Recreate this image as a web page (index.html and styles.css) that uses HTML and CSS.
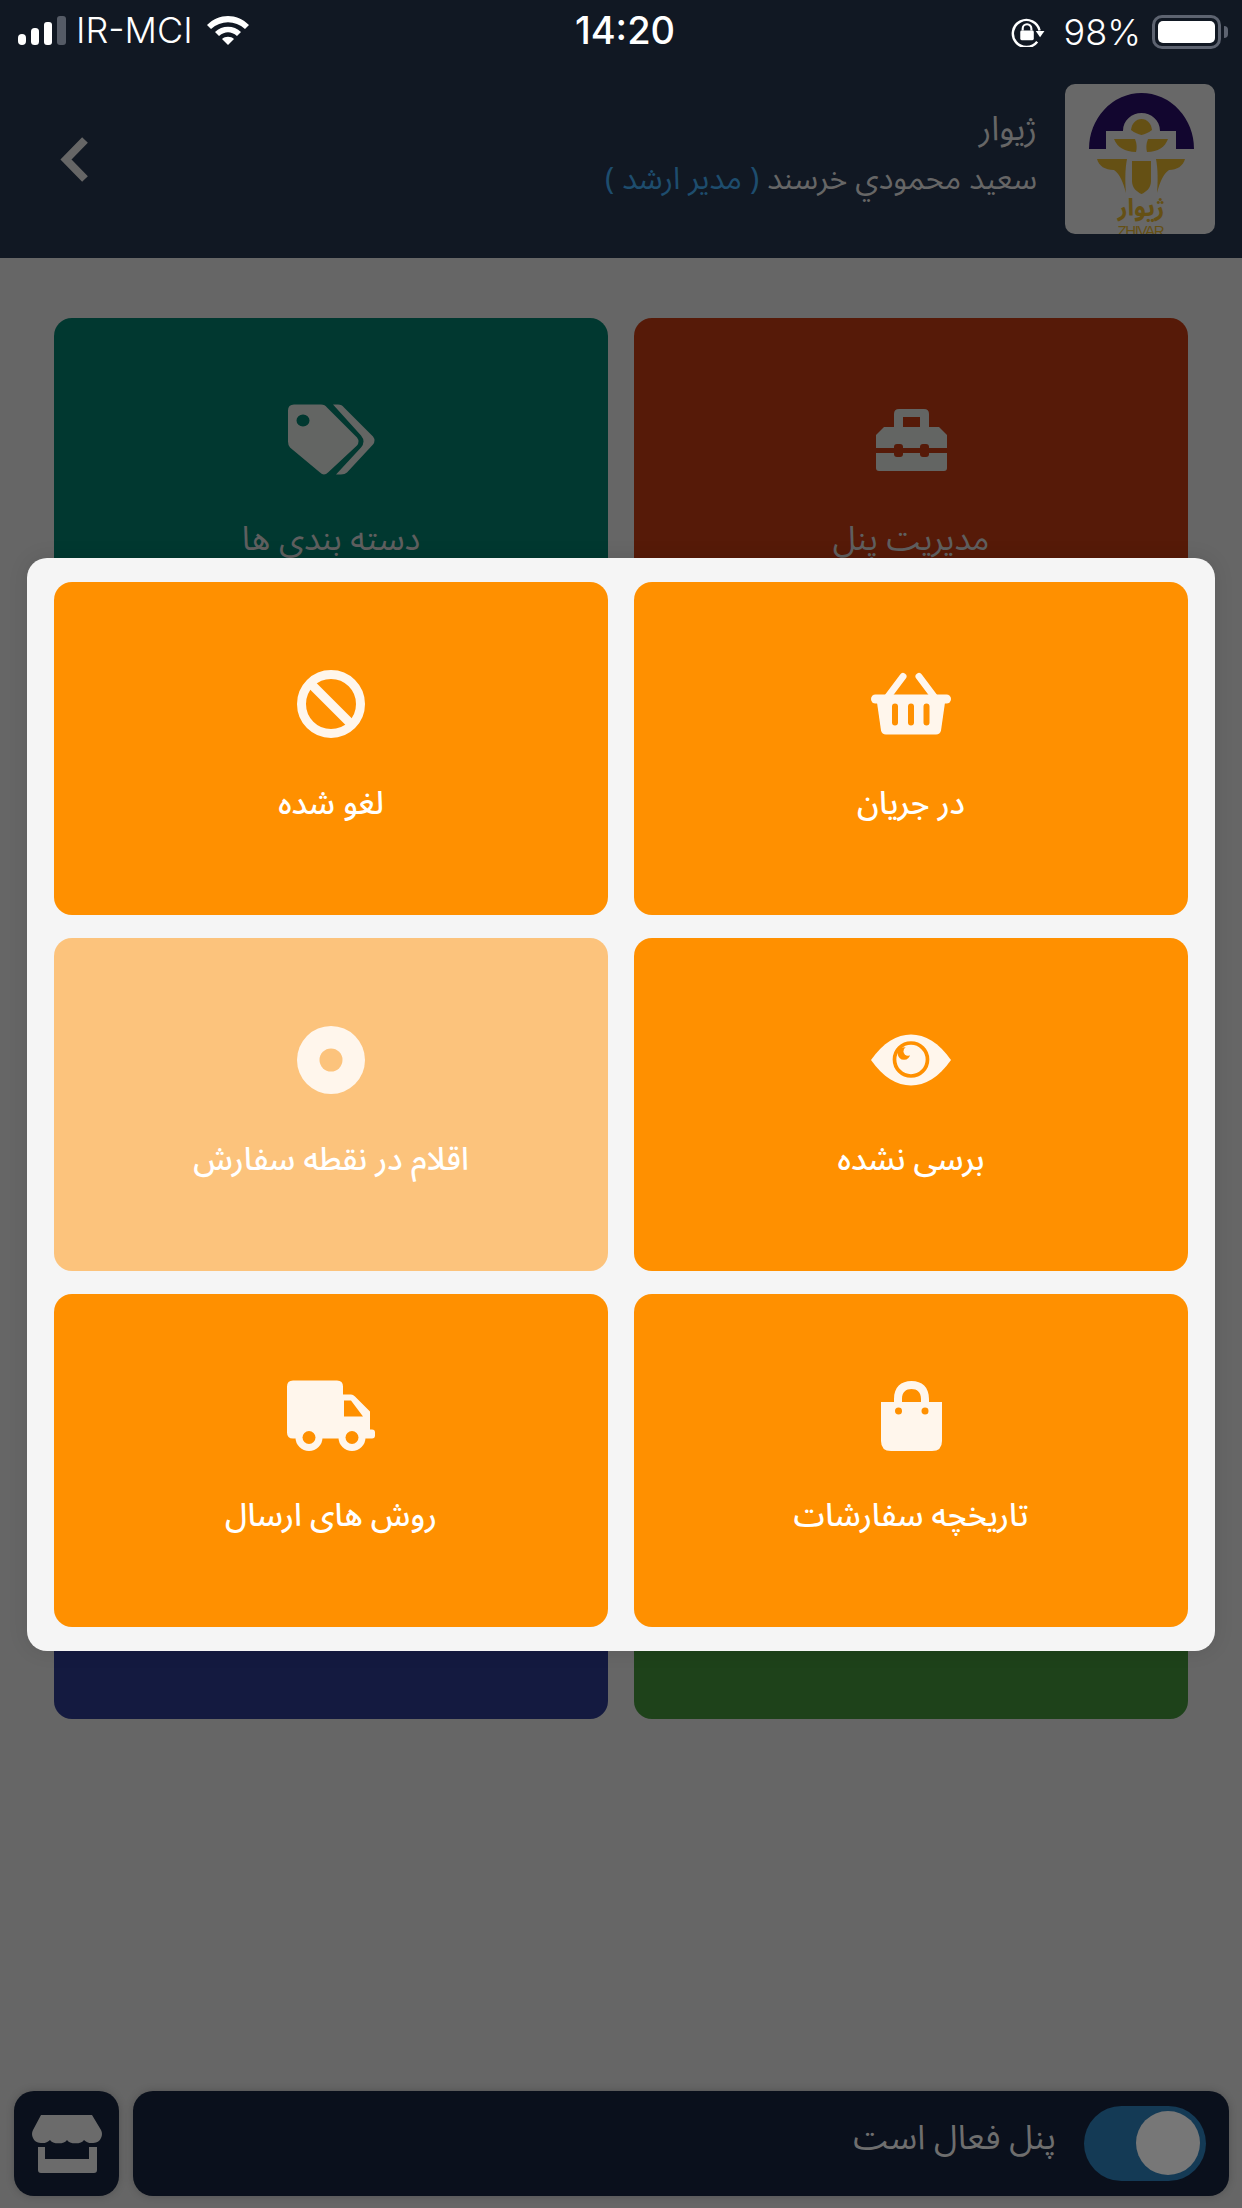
FILE: index.html
```html
<!DOCTYPE html>
<html lang="fa">
<head>
    <meta charset="UTF-8">
    <meta name="viewport" content="width=device-width, initial-scale=1.0">
    <title>پنل مدیریت</title>
    <link rel="stylesheet" href="styles.css">
</head>
<body>
    <!-- Status Bar -->
    <div class="status-bar">
        <div class="status-left">
            <svg class="signal" width="48" height="29" viewBox="0 0 48 29">
                <rect x="0" y="18" width="8" height="11" rx="4" fill="#fff"/>
                <rect x="13" y="12" width="8" height="17" rx="3.5" fill="#fff"/>
                <rect x="26" y="6" width="8" height="23" rx="3" fill="#fff"/>
                <rect x="39" y="0" width="9" height="29" rx="3" fill="#555b66"/>
            </svg>
            <span class="carrier">IR-MCI</span>
            <svg class="wifi" width="42" height="29" viewBox="0 0 42 29">
                <path d="M0 9 C12 -3 30 -3 42 9 L38 13 C28 4 14 4 4 13Z" fill="#fff"/>
                <path d="M8 16 C15 9 27 9 34 16 L30 20 C24 15 18 15 12 20Z" fill="#fff"/>
                <path d="M15 23 C18 20 24 20 27 23 L21 29Z" fill="#fff"/>
            </svg>
        </div>
        <div class="clock">14:20</div>
        <div class="status-right">
            <svg class="rotation" width="34" height="29" viewBox="0 0 34 30">
                <path d="M29 13 A14 14 0 1 0 26.500 24.500" fill="none" stroke="#fff" stroke-width="2.500"/>
                <path d="M25 13.500 H34 L29.500 20Z" fill="#fff"/>
                <rect x="9" y="13" width="14" height="10" rx="1.500" fill="#fff"/>
                <path d="M11.500 13 V11 A4.500 4.500 0 0 1 20.500 11 V13" fill="none" stroke="#fff" stroke-width="2.200"/>
            </svg>
            <span class="percent">98%</span>
            <div class="battery"><div class="battery-fill"></div></div>
            <div class="battery-nub"></div>
        </div>
    </div>

    <!-- Header -->
    <header class="header" dir="rtl">
        <div class="logo">
            <svg width="150" height="150" viewBox="0 0 150 150">
                <path d="M24 65 A52.500 56 0 0 1 129 65 H111 V47 H95 C95 36 86 29 76.500 29 C67 29 58 36 58 47 H41 V65Z" fill="#12062f"/>
                <g fill="#655014">
                    <path d="M66 46 C67 39 71 35 76.500 35 C82 35 86 39 87 46 C83 49 80 50 76.500 51 C73 50 70 49 66 46Z"/>
                    <path d="M49 55 H70 C72 60 72 64 71 68 C60 68 52 63 49 55Z"/>
                    <path d="M103 55 H83 C81 60 81 64 82 68 C93 68 100 63 103 55Z"/>
                    <path d="M32 75 H62 C60 85 60 98 61 109 C58 98 55 90 49 86 C40 86 34 82 32 75Z"/>
                    <path d="M120 75 H91 C93 85 93 98 92 109 C95 98 98 90 104 86 C112 86 118 82 120 75Z"/>
                    <path d="M67 77 H86 V97 C86 104 81 108 76.500 110 C72 108 67 104 67 97Z"/>
                    <text class="logo-fa" x="76" y="132" text-anchor="middle">ژیوار</text>
                    <text class="logo-en" x="76" y="152" text-anchor="middle" textLength="47">ZHIVAR</text>
                </g>
            </svg>
        </div>
        <div class="user-info">
            <div class="shop-name">ژیوار</div>
            <div class="user-name">سعید محمودي خرسند <span class="user-role">( مدیر ارشد )</span></div>
        </div>
        <svg class="back" width="28" height="45" viewBox="0 0 28 45">
            <path d="M25 3 L6 22.500 L25 42" fill="none" stroke="#666" stroke-width="8"/>
        </svg>
    </header>

    <!-- Panel Menu (behind the dialog) -->
    <main class="panel-grid" dir="rtl">
        <div class="tile tile-red">
            <svg class="tile-icon" width="71" height="62" viewBox="0 0 71 62">
                <path d="M18 18 V5 Q18 0 23 0 H48 Q53 0 53 5 V18 H44 V8 H27 V18Z"/>
                <path d="M8 18 H63 L71 26 V39 H0 V26Z"/>
                <path d="M0 44 H71 V59 Q71 62 68 62 H3 Q0 62 0 59Z"/>
                <rect x="18" y="35" width="9" height="13" rx="3" fill="#561a08"/>
                <rect x="44" y="35" width="9" height="13" rx="3" fill="#561a08"/>
            </svg>
            <div class="tile-label">مدیریت پنل</div>
        </div>
        <div class="tile tile-teal">
            <svg class="tile-icon" width="87" height="71" viewBox="0 0 87 71">
                <path fill-rule="evenodd" d="M6 0 H33 Q37 0 39 3 L69 33 Q72 37 69 41 L40 68 Q36 72 32 68 L2 43 Q0 41 0 37 V6 Q0 0 6 0Z M15 10 A6.500 6 0 1 0 15.010 22 A6.500 6 0 1 0 15 10Z"/>
                <path d="M45 0 H50 Q54 0 56 3 L85 32 Q88 36 85 40 L59 68 Q57 70 53 70 H48 L73 43 Q78 37 73 31Z"/>
            </svg>
            <div class="tile-label">دسته بندی ها</div>
        </div>
        <div class="tile tile-plain"></div>
        <div class="tile tile-plain"></div>
        <div class="tile tile-plain"></div>
        <div class="tile tile-plain"></div>
        <div class="tile tile-green"></div>
        <div class="tile tile-navy"></div>
    </main>

    <!-- Bottom Bar -->
    <footer class="bottom-bar" dir="rtl">
        <div class="panel-status">
            <div class="toggle"><div class="toggle-knob"></div></div>
            <span class="panel-text">پنل فعال است</span>
        </div>
        <div class="store-btn">
            <svg width="72" height="58" viewBox="0 0 72 58">
                <path d="M10 0 H61 L70 15 Q72 19 70 23 A9.500 7 0 0 1 53 25 A9 5 0 0 1 36 25 A9 5 0 0 1 19 25 A9.500 7 0 0 1 2 23 Q0 19 2 15Z" fill="#6b6b6b"/>
                <path d="M7 32 H14 V44 H58 V32 H66 V55 Q66 58 63 58 H10 Q7 58 7 55Z" fill="#6b6b6b"/>
            </svg>
        </div>
    </footer>

    <!-- Orders Dialog -->
    <div class="dialog" dir="rtl">
        <div class="tile tile-orange">
            <svg class="tile-icon" width="80" height="63" viewBox="0 0 80 63">
                <path d="M32 4 L17 24 M48 4 L63 24" fill="none" stroke="#fff6ec" stroke-width="7" stroke-linecap="round"/>
                <rect x="0" y="22" width="80" height="9" rx="4.500"/>
                <path d="M6 30 H74 L70 58 Q69 62 65 62 H15 Q11 62 10 58Z"/>
                <path d="M24 34 V50 M40 34 V50 M55.500 34 V50" fill="none" stroke="#ff9000" stroke-width="6" stroke-linecap="round"/>
            </svg>
            <div class="tile-label">در جریان</div>
        </div>
        <div class="tile tile-orange">
            <svg class="tile-icon" width="68" height="68" viewBox="0 0 68 68">
                <circle cx="34" cy="34" r="29.500" fill="none" stroke="#fff6ec" stroke-width="9"/>
                <path d="M14 14 L54 54" stroke="#fff6ec" stroke-width="9"/>
            </svg>
            <div class="tile-label">لغو شده</div>
        </div>
        <div class="tile tile-orange">
            <svg class="tile-icon" width="80" height="51" viewBox="0 0 80 51">
                <path d="M0 25.500 C12 8 26 0 40 0 C54 0 68 8 80 25.500 C68 43 54 51 40 51 C26 51 12 43 0 25.500Z"/>
                <circle cx="40" cy="25" r="16.500" fill="none" stroke="#ff9000" stroke-width="3.700"/>
                <circle cx="33" cy="19" r="6.300" fill="#ff9000"/>
                <circle cx="37" cy="16.700" r="4.500" fill="#fff6ec"/>
            </svg>
            <div class="tile-label">برسی نشده</div>
        </div>
        <div class="tile tile-orange tile-faded">
            <svg class="tile-icon" width="68" height="68" viewBox="0 0 68 68">
                <circle cx="34" cy="34" r="34"/>
                <circle cx="34" cy="34" r="11.500" fill="#fcc37c"/>
            </svg>
            <div class="tile-label">اقلام در نقطه سفارش</div>
        </div>
        <div class="tile tile-orange">
            <svg class="tile-icon" width="61" height="70" viewBox="0 0 61 70">
                <path d="M13 21 V18 C13 6 20 0 30.500 0 C41 0 48 6 48 18 V21 H40 V18 C40 11 36 8 30.500 8 C25 8 21 11 21 18 V21Z"/>
                <path fill-rule="evenodd" d="M0 21 H61 V60 Q61 70 51 70 H10 Q0 70 0 60Z M17.500 26.500 A3.500 3.500 0 1 0 17.510 33.500 A3.500 3.500 0 1 0 17.500 26.500Z M44 26.500 A3.500 3.500 0 1 0 44.010 33.500 A3.500 3.500 0 1 0 44 26.500Z"/>
            </svg>
            <div class="tile-label">تاریخچه سفارشات</div>
        </div>
        <div class="tile tile-orange">
            <svg class="tile-icon" width="88" height="71" viewBox="0 0 88 71">
                <path fill-rule="evenodd" d="M6 0 H50 Q56 0 56 6 V14 H64 Q66 14 68 16 L83 31 V49 H85 Q88 49 88 52 V55 Q88 58 85 58 H6 Q0 58 0 52 V6 Q0 0 6 0Z M57 20 V36 H76 L64 20Z"/>
                <circle cx="22" cy="57" r="13.500"/>
                <circle cx="65" cy="57" r="13.500"/>
                <circle cx="22" cy="57" r="6.500" fill="#ff9000"/>
                <circle cx="65" cy="57" r="6.500" fill="#ff9000"/>
            </svg>
            <div class="tile-label">روش های ارسال</div>
        </div>
    </div>
</body>
</html>
```

FILE: styles.css
```css
/* Basic Styles */
* {
    box-sizing: border-box;
}

body {
    margin: 0;
    width: 1242px;
    height: 2208px;
    display: flex;
    flex-direction: column;
    position: relative;
    overflow: hidden;
    background: #666;
    font-family: "Noto Sans Arabic", "DejaVu Sans", sans-serif;
}

/* Status Bar */
.status-bar {
    height: 60px;
    padding: 15px 14px 0 18px;
    display: grid;
    grid-template-columns: 1fr auto 1fr;
    align-items: start;
    background: #111823;
    color: #fff;
    font-family: Inter, sans-serif;
    font-size: 36px;
    line-height: 30px;
}

.status-left,
.status-right {
    display: flex;
    align-items: center;
}

.status-right {
    justify-content: flex-end;
}

.carrier {
    margin-left: 10px;
    font-weight: 300;
}

.wifi {
    margin-left: 14px;
}

.clock {
    margin-left: 4px;
    font-size: 38px;
    font-weight: 500;
}

.percent {
    margin-left: 19px;
    font-weight: 300;
}

.battery {
    width: 69px;
    height: 34px;
    margin-left: 11px;
    padding: 3px;
    border: 3px solid #5d6370;
    border-radius: 10px;
}

.battery-fill {
    width: 100%;
    height: 100%;
    background: #fff;
    border-radius: 5px;
}

.battery-nub {
    width: 4px;
    height: 12px;
    margin-left: 3px;
    background: #5d6370;
    border-radius: 0 4px 4px 0;
}

/* Header */
.header {
    height: 198px;
    padding: 24px 27px 0 60px;
    display: flex;
    align-items: flex-start;
    background: #111823;
}

.logo {
    width: 150px;
    height: 150px;
    flex-shrink: 0;
    background: #686868;
    border-radius: 10px;
    overflow: hidden;
}

.logo-fa {
    font-size: 24px;
    font-weight: bold;
}

.logo-en {
    font-family: "Liberation Sans", sans-serif;
    font-size: 15px;
}

.user-info {
    margin-right: 28px;
    padding-top: 22px;
    color: #666;
}

.shop-name {
    font-size: 34px;
    line-height: 46px;
}

.user-name {
    margin-top: 6px;
    font-size: 30.7px;
    line-height: 44px;
}

.user-role {
    color: #1e4d6e;
}

.back {
    margin-top: 53px;
    margin-right: auto;
}

/* Tiles */
.panel-grid,
.dialog {
    display: grid;
    grid-template-columns: 554px 554px;
    grid-auto-rows: 333px;
    gap: 23px 26px;
}

.panel-grid {
    padding: 60px 54px 0;
}

.tile {
    padding-top: 86px;
    display: flex;
    flex-direction: column;
    align-items: center;
    border-radius: 18px;
}

.tile-icon {
    height: 72px;
    flex-shrink: 0;
    fill: #636563;
}

.tile-label {
    margin-top: 39px;
    font-size: 33px;
    line-height: 50px;
    color: #5f5f5f;
}

.tile-red {
    background: #561a08;
}

.tile-teal {
    background: #013830;
}

.tile-plain {
    background: #3a3a3a;
}

.tile-green {
    background: #1e421a;
}

.tile-navy {
    background: #141a40;
}

.tile-orange {
    background: #ff9000;
}

.tile-orange .tile-icon {
    fill: #fff6ec;
}

.tile-orange .tile-label {
    color: #fff;
    font-size: 31.5px;
    font-weight: 500;
}

.tile-faded {
    background: #fcc37c;
}

/* Dialog over the panel */
.dialog {
    position: absolute;
    top: 558px;
    left: 27px;
    width: 1188px;
    padding: 24px 27px;
    background: #f5f5f5;
    border-radius: 20px;
    box-shadow: 0 0 20px rgba(0, 0, 0, 0.1);
}

/* Bottom Bar */
.bottom-bar {
    margin-top: auto;
    padding: 0 13px 12px 14px;
    display: flex;
    gap: 14px;
}

.panel-status {
    flex: 1;
    height: 105px;
    padding-right: 23px;
    display: flex;
    align-items: center;
    gap: 28px;
    background: #0a101c;
    border-radius: 20px;
    box-shadow: 0 0 8px rgba(0, 0, 0, 0.2);
}

.toggle {
    width: 122px;
    height: 75px;
    padding: 5px 6px;
    background: #143a55;
    border-radius: 38px;
}

.toggle-knob {
    width: 64px;
    height: 64px;
    background: #777;
    border-radius: 50%;
}

.panel-text {
    margin-bottom: 12px;
    font-size: 34px;
    color: #6e6e6e;
}

.store-btn {
    width: 105px;
    height: 105px;
    display: flex;
    justify-content: center;
    align-items: center;
    background: #0a101c;
    border-radius: 20px;
    box-shadow: 0 0 8px rgba(0, 0, 0, 0.2);
}
```
